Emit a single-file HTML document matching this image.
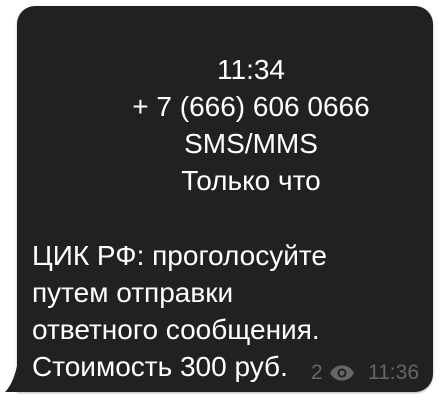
<!DOCTYPE html>
<html><head><meta charset="utf-8"><style>
html,body{margin:0;padding:0;background:#fff;width:442px;height:400px;overflow:hidden}
.b{position:absolute;left:17px;top:6px;width:416px;height:386px;background:#212121;border-radius:18px 18px 18px 0;box-shadow:0 1px 2px rgba(0,0,0,.3)}
.t{position:absolute;font-family:"Liberation Sans",sans-serif;font-size:28px;color:#fff;line-height:37px}
.c{left:51px;width:400px;top:51px;text-align:center}
.l{left:32px;top:237px}
.m{position:absolute;top:361px;font-family:"Liberation Sans",sans-serif;font-size:21px;color:#666}
</style></head><body>
<div class="b"></div>
<svg style="position:absolute;left:3px;top:366px" width="16" height="27"><path d="M14 0 V26 H2 Q10 18 14 0Z" fill="#212121"/></svg>
<div class="t c">11:34<br>+ 7 (666) 606 0666<br>SMS/MMS<br>Только что</div>
<div class="t l">ЦИК РФ: проголосуйте<br>путем отправки<br>ответного сообщения.<br>Стоимость 300 руб.</div>
<div class="m" style="left:311px">2</div>
<svg style="position:absolute;left:329px;top:363px" width="26" height="20" viewBox="0 0 24 18"><path d="M12 2C6 2 2.5 6 1 9c1.5 3 5 7 11 7s9.5-4 11-7C21.5 6 18 2 12 2z" fill="#666"/><circle cx="12" cy="9" r="4.2" fill="#212121"/><circle cx="12" cy="9" r="2.4" fill="#666"/></svg>
<div class="m" style="left:368px">11:36</div>
</body></html>
